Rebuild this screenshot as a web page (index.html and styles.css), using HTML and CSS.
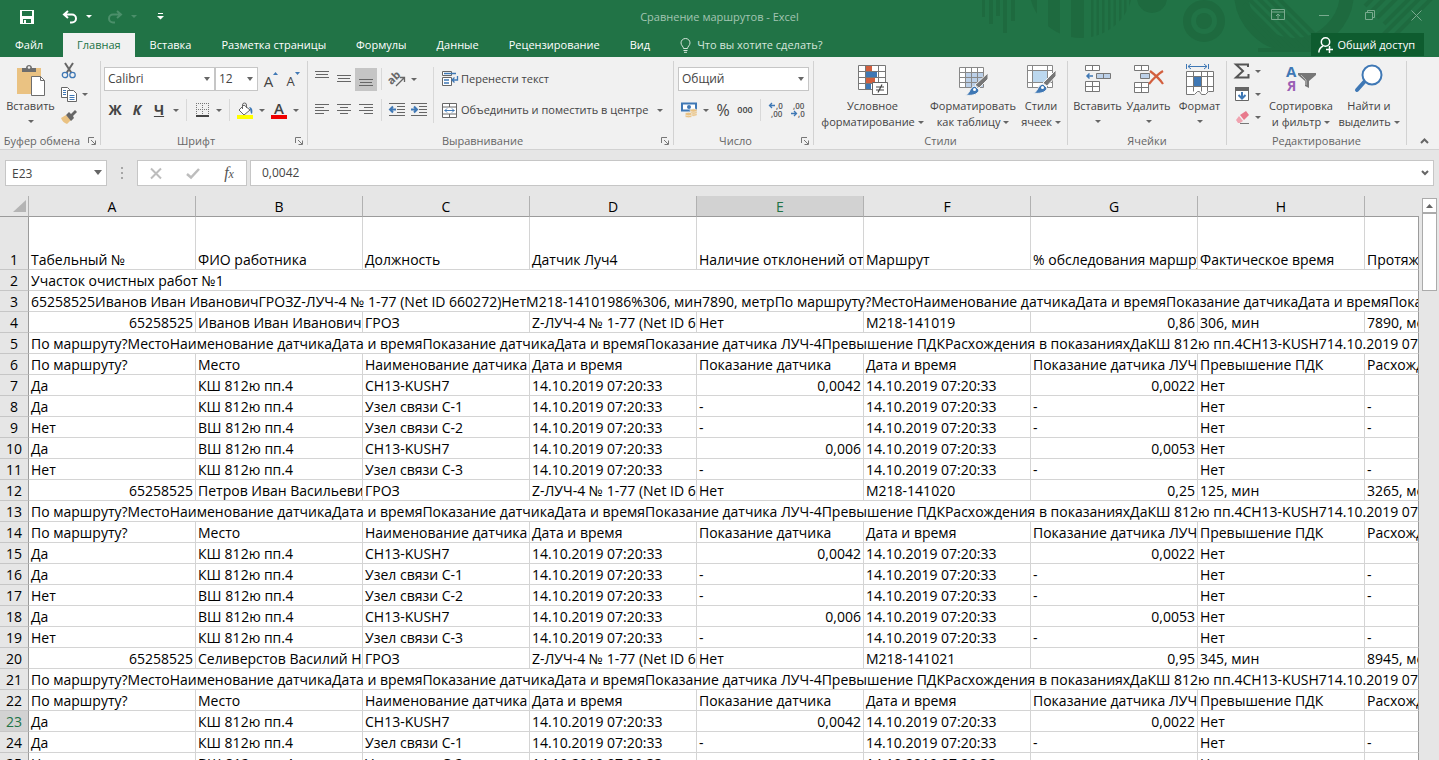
FILE: index.html
```
<!DOCTYPE html>
<html lang="ru">
<head>
    <meta charset="UTF-8">
    <meta name="viewport" content="width=device-width, initial-scale=1.0">
    <title>Сравнение маршрутов - Excel</title>
    <link rel="stylesheet" href="styles.css">
</head>
<body>
    <!-- Шапка окна -->
    <header class="header">
        <svg class="pattern" width="479" height="57" viewBox="0 0 479 57" aria-hidden="true">
            <defs>
                <clipPath id="disc"><circle cx="121" cy="-14" r="52"/></clipPath>
                <clipPath id="hole"><circle cx="334" cy="-8" r="60"/></clipPath>
            </defs>
            <g fill="#1e6a3f">
                <path d="M22 0h3v17h-3zM29 0h4v24h-4zM36 0h4v16h-4zM43 0h4v33h-4zM51 0h4v21h-4z"/>
                <g clip-path="url(#disc)">
                    <path d="M70 0h7v40h-7zM88 0h12v40h-12zM111 0h13v40h-13zM131 0h2.500v40h-2.500zM136.500 0h2.500v40h-2.500zM142 0h2.500v40h-2.500zM148 0h2.500v40h-2.500zM153.500 0h2.500v40h-2.500zM159 0h2.500v40h-2.500zM164 0h2.500v40h-2.500zM169 0h2v40h-2z"/>
                </g>
                <circle cx="192" cy="-2" r="15"/>
                <circle cx="244" cy="21" r="8"/>
            </g>
            <g fill="none" stroke="#1e6a3f">
                <circle cx="244" cy="21" r="17" stroke-width="8"/>
                <circle cx="334" cy="-8" r="53" stroke-width="14"/>
                <g clip-path="url(#hole)" stroke-width="4">
                    <path d="M284 14l40 40M284 4l50 50M288-2l50 50M298-2l50 50M308-2l50 50M318-2l50 50"/>
                </g>
                <path d="M298 50h54" stroke-width="4"/>
                <path d="M405 6l8-8M411 12l16-16M417 18l24-24M424 24l30-30M420 38l48-48M432 38l44-44" stroke-width="4"/>
            </g>
        </svg>
        <div class="titlebar">
            <div class="quick">
                <button type="button" aria-label="Сохранить">
                    <svg width="16" height="16" viewBox="0 0 16 16"><path d="M1 1h14v14H1z" fill="#fff"/><path d="M3 2h10v5H3zM4 10h8v4H4z" fill="#217346"/><path d="M5 11h2v3H5z" fill="#fff"/></svg>
                </button>
                <button type="button" class="undo" aria-label="Отменить">
                    <svg width="16" height="14" viewBox="0 0 16 14" fill="none" stroke="#fff" stroke-width="2"><path d="M6 1L2 4.500L6 8M2 4.500h8a3.500 3.500 0 0 1 0 8H8"/></svg>
                    <i class="caret"></i>
                </button>
                <button type="button" class="redo" aria-label="Вернуть" disabled>
                    <svg width="16" height="14" viewBox="0 0 16 14" fill="none" stroke="#4b8f6a" stroke-width="2"><path d="M10 1l4 3.500L10 8M14 4.500H6a3.500 3.500 0 0 0 0 8h2"/></svg>
                    <i class="caret"></i>
                </button>
                <button type="button" class="customize" aria-label="Настройка панели быстрого доступа">
                    <svg width="7" height="7" viewBox="0 0 7 7" fill="#fff"><path d="M1 0h5v1H1zM0 3h7L3.500 6.500z"/></svg>
                </button>
            </div>
            <div class="title">Сравнение маршрутов - Excel</div>
            <div class="window-buttons">
                <button type="button" aria-label="Параметры отображения ленты">
                    <svg width="14" height="12" viewBox="0 0 14 12" fill="none" stroke="#79ab8f"><path d="M.5.5h13v10H.5zM.5 3h13M7 10V5M5 7l2-2 2 2"/></svg>
                </button>
                <button type="button" aria-label="Свернуть">
                    <svg width="10" height="10" viewBox="0 0 10 10" stroke="#79ab8f"><path d="M0 5.500h10"/></svg>
                </button>
                <button type="button" aria-label="Восстановить">
                    <svg width="10" height="10" viewBox="0 0 10 10" fill="none" stroke="#79ab8f"><path d="M.5 2.500h7v7h-7zM2.500 2.500v-2h7v7h-2"/></svg>
                </button>
                <button type="button" aria-label="Закрыть">
                    <svg width="11" height="11" viewBox="0 0 11 11" stroke="#79ab8f"><path d="M.5.5l10 10M10.500.5l-10 10"/></svg>
                </button>
            </div>
        </div>
        <nav class="tabs">
            <a href="#" class="file">Файл</a>
            <a href="#" class="active">Главная</a>
            <a href="#">Вставка</a>
            <a href="#">Разметка страницы</a>
            <a href="#">Формулы</a>
            <a href="#">Данные</a>
            <a href="#">Рецензирование</a>
            <a href="#">Вид</a>
            <a href="#" class="tell-me">
                <svg width="11" height="15" viewBox="0 0 11 15" fill="none" stroke="#d5e6dc"><path d="M3.500 10.500C3.500 8.500 1 7.500 1 4.900a4.500 4.400 0 0 1 9 0c0 2.600-2.500 3.600-2.500 5.600zM3.500 12.500h4M4 14.300h3"/></svg>
                Что вы хотите сделать?
            </a>
            <button type="button" class="share">
                <svg width="15" height="16" viewBox="0 0 15 16" fill="none" stroke="#fff" stroke-width="1.500"><circle cx="7.500" cy="5" r="4.200"/><path d="M.8 15.500c.3-3.500 1.900-5.500 4.200-6.500M8 12.500h7M11.500 9v7"/></svg>
                Общий доступ
            </button>
        </nav>
    </header>

    <!-- Лента -->
    <section class="ribbon">
        <div class="group clipboard">
            <div class="body">
                <button type="button" class="big">
                    <svg width="30" height="32" viewBox="0 0 30 32"><path d="M1 4h24v26H1z" fill="#eac282"/><path d="M6 4h4c0-4 6-4 6 0h4v4H6z" fill="#6d6d6d"/><circle cx="13" cy="3.500" r="1.300" fill="#f1f1f1"/><path d="M15.500 12.500h9l4 4v15h-13z" fill="#fff" stroke="#6d6d6d"/><path d="M24.500 12.500v4h4" fill="none" stroke="#6d6d6d"/></svg>
                    <span>Вставить</span>
                    <i class="caret"></i>
                </button>
                <div class="stack">
                    <button type="button" aria-label="Вырезать">
                        <svg width="16" height="16" viewBox="0 0 16 16" fill="none"><path d="M4 0l6.500 10M12 0L5.500 10" stroke="#666" stroke-width="2"/><g stroke="#3f78b5" stroke-width="1.300"><circle cx="4" cy="12" r="2.700"/><circle cx="11.500" cy="12" r="2.700"/></g></svg>
                    </button>
                    <button type="button" aria-label="Копировать">
                        <svg width="16" height="15" viewBox="0 0 16 15" fill="#fff" stroke="#666"><path d="M.5.500h6l2 2v8h-8z"/><path d="M6.500 3.500h6l3 3v8h-9z"/><path d="M2 3.500h3M2 5.500h3M2 7.500h3M8.500 8.500h5M8.500 10.500h5M8.500 12.500h5" stroke="#3f78b5"/></svg>
                        <i class="caret"></i>
                    </button>
                    <button type="button" aria-label="Формат по образцу">
                        <svg width="16" height="15" viewBox="0 0 16 15"><path d="M0 8l5-3 5 5-4 4c-3-1-5-3-6-6z" fill="#eac282"/><path d="M5 5l3-3 2 2 4-4 2 2-4 4 1 2-3 3z" fill="#666"/></svg>
                    </button>
                </div>
            </div>
            <div class="caption"><span>Буфер обмена</span><button type="button" class="launcher" aria-label="Параметры буфера обмена"><svg width="8" height="8" viewBox="0 0 8 8" fill="none" stroke="#777"><path d="M.5 6V.5H6M3 3l4 4M7.500 3.500v4h-4"/></svg></button></div>
        </div>

        <div class="group font">
            <div class="body rows">
                <div class="row">
                    <div class="combo font-name"><select aria-label="Шрифт"><option>Calibri</option></select></div>
                    <div class="combo font-size"><select aria-label="Размер шрифта"><option>12</option></select></div>
                    <button type="button" class="tool letter grow" aria-label="Увеличить размер">A<svg width="5" height="3" viewBox="0 0 5 3"><path d="M0 3h5L2.500 0z" fill="#3f78b5"/></svg></button>
                    <button type="button" class="tool letter shrink" aria-label="Уменьшить размер">A<svg width="5" height="3" viewBox="0 0 5 3"><path d="M0 0h5L2.500 3z" fill="#3f78b5"/></svg></button>
                </div>
                <div class="row">
                    <button type="button" class="tool style"><b>Ж</b></button>
                    <button type="button" class="tool style"><b><em>К</em></b></button>
                    <button type="button" class="tool style"><b><u>Ч</u></b></button>
                    <button type="button" class="drop" aria-label="Вид подчеркивания"><i class="caret"></i></button>
                    <span class="sep"></span>
                    <button type="button" class="tool" aria-label="Границы"><svg width="13" height="14" viewBox="0 0 13 14" stroke="#777" fill="none"><path d="M0 .5h13M0 6.500h13M.5 0v13M6.500 0v13M12.500 0v13" stroke-dasharray="1 1"/><path d="M0 13h13" stroke="#444" stroke-width="2"/></svg></button>
                    <button type="button" class="drop" aria-label="Выбор границ"><i class="caret"></i></button>
                    <span class="sep"></span>
                    <button type="button" class="tool" aria-label="Цвет заливки"><svg width="16" height="17" viewBox="0 0 16 17"><path d="M7 3l6 5-6 5-5-5z" fill="#fff" stroke="#666"/><path d="M5.500 7V3a2 2 0 0 1 4 0v3" fill="none" stroke="#666"/><path d="M12 5c3 0 4 3 3 7-2-1-1-4-3-7z" fill="#3f78b5"/><path d="M0 13h16v4H0z" fill="#ff0"/></svg></button>
                    <button type="button" class="drop" aria-label="Выбор заливки"><i class="caret"></i></button>
                    <button type="button" class="tool font-color" aria-label="Цвет текста">A</button>
                    <button type="button" class="drop" aria-label="Выбор цвета текста"><i class="caret"></i></button>
                </div>
            </div>
            <div class="caption"><span>Шрифт</span><button type="button" class="launcher" aria-label="Параметры шрифта"><svg width="8" height="8" viewBox="0 0 8 8" fill="none" stroke="#777"><path d="M.5 6V.5H6M3 3l4 4M7.500 3.500v4h-4"/></svg></button></div>
        </div>

        <div class="group align">
            <div class="body">
                <div class="rows">
                    <div class="row">
                        <button type="button" class="tool" aria-label="По верхнему краю"><svg width="14" height="18" viewBox="0 0 14 18" stroke="#666"><path d="M0 1.500h14M1 4.500h12M0 7.500h14"/></svg></button>
                        <button type="button" class="tool" aria-label="По середине"><svg width="14" height="18" viewBox="0 0 14 18" stroke="#666"><path d="M0 5.500h14M1 8.500h12M0 11.500h14"/></svg></button>
                        <button type="button" class="tool pressed" aria-label="По нижнему краю"><svg width="14" height="18" viewBox="0 0 14 18" stroke="#666"><path d="M0 9.500h14M1 12.500h12M0 15.500h14"/></svg></button>
                        <span class="sep"></span>
                        <button type="button" class="tool" aria-label="Ориентация"><svg width="17" height="16" viewBox="0 0 17 16"><text x="0" y="12" font-size="11" font-weight="bold" fill="#666" transform="rotate(-45 4 10)">ab</text><path d="M7 15l8-8M15.500 11V6.500H11" fill="none" stroke="#666" stroke-width="1.300"/></svg></button>
                        <button type="button" class="drop" aria-label="Выбор ориентации"><i class="caret"></i></button>
                    </div>
                    <div class="row">
                        <button type="button" class="tool" aria-label="По левому краю"><svg width="14" height="12" viewBox="0 0 14 12" stroke="#666"><path d="M0 .5h14M0 3.500h9M0 6.500h14M0 9.500h9"/></svg></button>
                        <button type="button" class="tool" aria-label="По центру"><svg width="14" height="12" viewBox="0 0 14 12" stroke="#666"><path d="M0 .5h14M3 3.500h8M0 6.500h14M3 9.500h8"/></svg></button>
                        <button type="button" class="tool" aria-label="По правому краю"><svg width="14" height="12" viewBox="0 0 14 12" stroke="#666"><path d="M0 .5h14M5 3.500h9M0 6.500h14M5 9.500h9"/></svg></button>
                        <span class="sep"></span>
                        <button type="button" class="tool" aria-label="Уменьшить отступ"><svg width="16" height="14" viewBox="0 0 16 14" stroke="#666"><path d="M0 .5h16M8 3.500h8M8 6.500h8M8 9.500h8M0 12.500h16"/><path d="M7 6.500H2M4 3.500l-3 3 3 3" fill="none" stroke="#3f78b5" stroke-width="2"/></svg></button>
                        <button type="button" class="tool" aria-label="Увеличить отступ"><svg width="16" height="14" viewBox="0 0 16 14" stroke="#666"><path d="M0 .5h16M8 3.500h8M8 6.500h8M8 9.500h8M0 12.500h16"/><path d="M0 6.500h5M3 3.500l3 3-3 3" fill="none" stroke="#3f78b5" stroke-width="2"/></svg></button>
                    </div>
                </div>
                <span class="sep tall"></span>
                <div class="rows">
                    <div class="row">
                        <button type="button" class="wide"><svg width="16" height="16" viewBox="0 0 16 16" fill="#fff" stroke="#666"><path d="M.5.500h9v4h-9zM.5 6.500h9v8h-9z"/><path d="M2 2.500h12M2 9h5M2 12h5M15.500 5v4h-5M12.500 6.500L10 9l2.500 2.500" fill="none" stroke="#3f78b5" stroke-width="1.300"/></svg>Перенести текст</button>
                    </div>
                    <div class="row">
                        <button type="button" class="wide"><svg width="16" height="15" viewBox="0 0 16 15" fill="#fff" stroke="#666"><path d="M.5.500h14v14H.5zM.5 4h14M.5 11h14M7.500.500V4M7.500 11v3.500"/><path d="M2.500 7.500h10M5 5.500l-2 2 2 2M10 5.500l2 2-2 2" fill="none" stroke="#3f78b5"/></svg>Объединить и поместить в центре</button>
                        <button type="button" class="drop" aria-label="Варианты объединения"><i class="caret"></i></button>
                    </div>
                </div>
            </div>
            <div class="caption"><span>Выравнивание</span><button type="button" class="launcher" aria-label="Параметры выравнивания"><svg width="8" height="8" viewBox="0 0 8 8" fill="none" stroke="#777"><path d="M.5 6V.5H6M3 3l4 4M7.500 3.500v4h-4"/></svg></button></div>
        </div>

        <div class="group number">
            <div class="body rows">
                <div class="row">
                    <div class="combo format"><select aria-label="Числовой формат"><option>Общий</option></select></div>
                </div>
                <div class="row">
                    <button type="button" class="tool" aria-label="Финансовый формат"><svg width="17" height="16" viewBox="0 0 17 16"><path d="M1 1.500h14v7H1z" fill="#fff" stroke="#3f78b5" stroke-width="2"/><circle cx="8" cy="5" r="2" fill="#3f78b5"/><g fill="#eac282" stroke="#f1f1f1" stroke-width=".6"><ellipse cx="12.500" cy="12.500" rx="3.500" ry="1.700"/><ellipse cx="12.500" cy="10.500" rx="3.500" ry="1.700"/><ellipse cx="12.500" cy="8.500" rx="3.500" ry="1.700"/><ellipse cx="7.500" cy="14" rx="3.500" ry="1.700"/><ellipse cx="7.500" cy="12" rx="3.500" ry="1.700"/></g></svg></button>
                    <button type="button" class="drop" aria-label="Выбор валюты"><i class="caret"></i></button>
                    <button type="button" class="tool percent">%</button>
                    <button type="button" class="tool thousands">000</button>
                    <span class="sep"></span>
                    <button type="button" class="tool" aria-label="Увеличить разрядность"><svg class="digits" width="16" height="16" viewBox="0 0 16 16"><text x="8" y="7">,0</text><text x="3" y="15">,00</text><path d="M7 3.500H2M4 1L1.500 3.500L4 6" fill="none" stroke="#3f78b5" stroke-width="1.300"/></svg></button>
                    <button type="button" class="tool" aria-label="Уменьшить разрядность"><svg class="digits" width="16" height="16" viewBox="0 0 16 16"><text x="3" y="7">,00</text><text x="8" y="15">,0</text><path d="M1 11.500h5M4 9l2.500 2.500L4 14" fill="none" stroke="#3f78b5" stroke-width="1.300"/></svg></button>
                </div>
            </div>
            <div class="caption"><span>Число</span><button type="button" class="launcher" aria-label="Параметры числа"><svg width="8" height="8" viewBox="0 0 8 8" fill="none" stroke="#777"><path d="M.5 6V.5H6M3 3l4 4M7.500 3.500v4h-4"/></svg></button></div>
        </div>

        <div class="group styles">
            <div class="body">
                <button type="button" class="big conditional">
                    <svg width="32" height="32" viewBox="0 0 32 32"><path d="M1.500 1.500h27v24h-27z" fill="#fff"/><path d="M9 2h6v5H9zM9 14h9v5H9z" fill="#d35f3e"/><path d="M9 8h11v5H9zM9 20h5v5H9z" fill="#3f78b5"/><path d="M1.500 1.500h27v24h-27zM1.500 7.500h27M1.500 13.500h27M1.500 19.500h27M8.500 1.500v24M21.500 1.500v24" fill="none" stroke="#777"/><path d="M15.500 18.500h15v12h-15z" fill="#fff" stroke="#666"/><path d="M19 23h8M19 26h8M25 20.500l-4 8" stroke="#444" stroke-width="1.200"/></svg>
                    <span>Условное<br>форматирование <i class="caret"></i></span>
                </button>
                <button type="button" class="big as-table">
                    <svg width="32" height="32" viewBox="0 0 32 32"><path d="M2.500 3.500h24v20h-24z" fill="#fff"/><path d="M9 9h17v14H9z" fill="#bcd0e8"/><path d="M2.500 3.500h24v20h-24zM2.500 8.500h24M2.500 13.500h24M2.500 18.500h24M8.500 3.500v20M14.500 3.500v20M20.500 3.500v20" fill="none" stroke="#888"/><path d="M31 9v6l-9 9-4-3z" fill="#777" stroke="#f1f1f1"/><path d="M8 31c5 0 4-8 10-9l4 4c-1 5-8 6-14 5z" fill="#3f78b5" stroke="#f1f1f1"/><circle cx="17.500" cy="25.500" r="1.500" fill="#fff"/></svg>
                    <span>Форматировать<br>как таблицу <i class="caret"></i></span>
                </button>
                <button type="button" class="big cell-styles">
                    <svg width="32" height="32" viewBox="0 0 32 32"><path d="M2.500 1.500h25v22h-25z" fill="#fff"/><path d="M8 7h14v11H8z" fill="#bcd8ef"/><path d="M2.500 1.500h25v22h-25zM2.500 6.500h25M2.500 18.500h25M7.500 1.500v22M22.500 1.500v22" fill="none" stroke="#888"/><path d="M31 6v6l-9 10-4-3z" fill="#777" stroke="#f1f1f1"/><path d="M8 29c5 0 4-8 10-9l4 4c-1 5-8 6-14 5z" fill="#3f78b5" stroke="#f1f1f1"/><circle cx="17.500" cy="23.500" r="1.500" fill="#fff"/></svg>
                    <span>Стили<br>ячеек <i class="caret"></i></span>
                </button>
            </div>
            <div class="caption"><span>Стили</span></div>
        </div>

        <div class="group cells">
            <div class="body">
                <button type="button" class="big">
                    <svg width="30" height="32" viewBox="0 0 30 32" fill="#fff" stroke="#777"><path d="M2.500 1.500h14v5h-14zM9.500 1.500v5M2.500 17.500h14v10h-14zM9.500 17.500v10M2.500 22.500h14"/><path d="M13.500 9.500h14v5h-14zM20.500 9.500v5" fill="#bcd0e8"/><path d="M10 12H4M6.500 9.500L4 12l2.500 2.500" fill="none" stroke="#3f78b5" stroke-width="1.500"/></svg>
                    <span>Вставить</span>
                    <i class="caret"></i>
                </button>
                <button type="button" class="big">
                    <svg width="30" height="32" viewBox="0 0 30 32" fill="#fff" stroke="#777"><path d="M.5 1.500h14v5H.5zM7.500 1.500v5M.5 18.500h14v10H.5zM7.500 18.500v10M.5 23.500h14"/><path d="M6.500 9.500h9v5h-9z" fill="#bcd0e8"/><path d="M16 7c4 3 9 7 13 13M29 7c-5 3-10 8-14 13" fill="none" stroke="#d35f3e" stroke-width="2.200"/></svg>
                    <span>Удалить</span>
                    <i class="caret"></i>
                </button>
                <button type="button" class="big">
                    <svg width="30" height="32" viewBox="0 0 30 32" fill="#fff" stroke="#777"><path d="M1.500 7.500h27v20h-5l-3 3h-4l-2-3h-2l-3 3h-8z"/><path d="M1.500 12.500h27M1.500 22.500h27M8.500 7.500v20M16.500 7.500v20M22.500 7.500v20" fill="none"/><path d="M9 13h7v9H9z" fill="#3f78b5" stroke="none"/><path d="M1.500 0v5M23.500 0v5M3 2.500h19M6 0L3 2.500L6 5M19 0l3 2.500L19 5" fill="none" stroke="#3f78b5"/></svg>
                    <span>Формат</span>
                    <i class="caret"></i>
                </button>
            </div>
            <div class="caption"><span>Ячейки</span></div>
        </div>

        <div class="group editing">
            <div class="body">
                <div class="stack">
                    <button type="button" aria-label="Автосумма">
                        <svg width="16" height="16" viewBox="0 0 16 16"><path d="M14 4V1.500H2L9 8l-7 6.500h12.500V11" fill="none" stroke="#555" stroke-width="2"/></svg>
                        <i class="caret"></i>
                    </button>
                    <button type="button" aria-label="Заполнить">
                        <svg width="16" height="16" viewBox="0 0 16 16"><path d="M1.500 1.500h13v13h-13z" fill="#fff" stroke="#666"/><path d="M1 1h14v4H1z" fill="#666"/><path d="M8 6v6M4.500 9l3.500 3.500L11.500 9" fill="none" stroke="#3f78b5" stroke-width="2"/></svg>
                        <i class="caret"></i>
                    </button>
                    <button type="button" aria-label="Очистить">
                        <svg width="16" height="15" viewBox="0 0 16 15"><path d="M6 5l6-4 3 4-5 5z" fill="#e8798c"/><path d="M5 6l4 5-3 2H4L2 10z" fill="#f0a3b0"/><path d="M6 13.500h9" stroke="#777"/></svg>
                        <i class="caret"></i>
                    </button>
                </div>
                <button type="button" class="big sort">
                    <svg width="32" height="32" viewBox="0 0 32 32"><text x="1" y="13" font-size="15" font-weight="bold" fill="#3f78b5">А</text><text x="2" y="27" font-size="14" font-weight="bold" fill="#9b5fb5">Я</text><path d="M13 9h18v2l-7 6v7l-4-2v-5l-7-6z" fill="#777"/><path d="M16 11l5 5v5" stroke="#bbb" fill="none"/></svg>
                    <span>Сортировка<br>и фильтр <i class="caret"></i></span>
                </button>
                <button type="button" class="big find">
                    <svg width="30" height="32" viewBox="0 0 30 32"><path d="M11 17L3 26" stroke="#3f78b5" stroke-width="4" stroke-linecap="round"/><circle cx="18" cy="11" r="9.500" fill="#fff" stroke="#3f78b5" stroke-width="2"/></svg>
                    <span>Найти и<br>выделить <i class="caret"></i></span>
                </button>
            </div>
            <div class="caption"><span>Редактирование</span></div>
        </div>
        <button type="button" class="collapse" aria-label="Свернуть ленту"><svg width="9" height="6" viewBox="0 0 9 6" fill="none" stroke="#666" stroke-width="2"><path d="M1 5l3.500-3.500L8 5"/></svg></button>
    </section>

    <!-- Строка формул -->
    <section class="formula-bar">
        <div class="combo name-box"><input type="text" value="E23" aria-label="Имя ячейки"></div>
        <span class="dots"></span>
        <div class="formula-buttons">
            <button type="button" aria-label="Отмена"><svg width="12" height="11" viewBox="0 0 12 11" stroke="#bdbdbd" stroke-width="2"><path d="M1 .5l10 10M11 .5l-10 10"/></svg></button>
            <button type="button" aria-label="Ввод"><svg width="14" height="11" viewBox="0 0 14 11" fill="none" stroke="#bdbdbd" stroke-width="2.500"><path d="M1 6l4 3.500L13 1"/></svg></button>
            <button type="button" class="fx" aria-label="Вставить функцию"><em>f<small>x</small></em></button>
        </div>
        <div class="formula">
            <input type="text" value="0,0042" aria-label="Строка формул">
            <button type="button" aria-label="Развернуть строку формул"><svg width="8" height="6" viewBox="0 0 8 6" fill="none" stroke="#666" stroke-width="2"><path d="M1 1l3 3 3-3"/></svg></button>
        </div>
    </section>

    <!-- Лист -->
    <main class="workspace">
        <div class="sheet">
            <table>
                <colgroup>
                    <col class="numbers"><col class="data"><col class="data"><col class="data"><col class="data"><col class="data"><col class="data"><col class="data"><col class="data"><col>
                </colgroup>
                <thead>
                    <tr><th class="corner"><i></i></th><th>A</th><th>B</th><th>C</th><th>D</th><th class="selected">E</th><th>F</th><th>G</th><th>H</th><th></th></tr>
                </thead>
                <tbody>
                    <tr class="first"><th>1</th><td>Табельный №</td><td>ФИО работника</td><td>Должность</td><td>Датчик Луч4</td><td>Наличие отклонений от маршрута</td><td>Маршрут</td><td>% обследования маршрута</td><td>Фактическое время</td><td>Протяженность</td></tr>
                    <tr><th>2</th><td colspan="9">Участок очистных работ №1</td></tr>
                    <tr><th>3</th><td colspan="9">65258525Иванов Иван ИвановичГРОЗZ-ЛУЧ-4 № 1-77 (Net ID 660272)НетМ218-14101986%306, мин7890, метрПо маршруту?МестоНаименование датчикаДата и времяПоказание датчикаДата и времяПоказание датчика</td></tr>
                    <tr><th>4</th><td class="num">65258525</td><td>Иванов Иван Иванович</td><td>ГРОЗ</td><td>Z-ЛУЧ-4 № 1-77 (Net ID 660272)</td><td>Нет</td><td>М218-141019</td><td class="num">0,86</td><td>306, мин</td><td>7890, метр</td></tr>
                    <tr><th>5</th><td colspan="9">По маршруту?МестоНаименование датчикаДата и времяПоказание датчикаДата и времяПоказание датчика ЛУЧ-4Превышение ПДКРасхождения в показанияхДаКШ 812ю пп.4CH13-KUSH714.10.2019 07:20:33</td></tr>
                    <tr><th>6</th><td>По маршруту?</td><td>Место</td><td>Наименование датчика</td><td>Дата и время</td><td>Показание датчика</td><td>Дата и время</td><td>Показание датчика ЛУЧ-4</td><td>Превышение ПДК</td><td>Расхождения в показаниях</td></tr>
                    <tr><th>7</th><td>Да</td><td>КШ 812ю пп.4</td><td>CH13-KUSH7</td><td>14.10.2019 07:20:33</td><td class="num">0,0042</td><td>14.10.2019 07:20:33</td><td class="num">0,0022</td><td>Нет</td><td></td></tr>
                    <tr><th>8</th><td>Да</td><td>КШ 812ю пп.4</td><td>Узел связи С-1</td><td>14.10.2019 07:20:33</td><td>-</td><td>14.10.2019 07:20:33</td><td>-</td><td>Нет</td><td>-</td></tr>
                    <tr><th>9</th><td>Нет</td><td>ВШ 812ю пп.4</td><td>Узел связи С-2</td><td>14.10.2019 07:20:33</td><td>-</td><td>14.10.2019 07:20:33</td><td>-</td><td>Нет</td><td>-</td></tr>
                    <tr><th>10</th><td>Да</td><td>ВШ 812ю пп.4</td><td>CH13-KUSH7</td><td>14.10.2019 07:20:33</td><td class="num">0,006</td><td>14.10.2019 07:20:33</td><td class="num">0,0053</td><td>Нет</td><td></td></tr>
                    <tr><th>11</th><td>Нет</td><td>КШ 812ю пп.4</td><td>Узел связи С-3</td><td>14.10.2019 07:20:33</td><td>-</td><td>14.10.2019 07:20:33</td><td>-</td><td>Нет</td><td>-</td></tr>
                    <tr><th>12</th><td class="num">65258525</td><td>Петров Иван Васильевич</td><td>ГРОЗ</td><td>Z-ЛУЧ-4 № 1-77 (Net ID 660272)</td><td>Нет</td><td>М218-141020</td><td class="num">0,25</td><td>125, мин</td><td>3265, метр</td></tr>
                    <tr><th>13</th><td colspan="9">По маршруту?МестоНаименование датчикаДата и времяПоказание датчикаДата и времяПоказание датчика ЛУЧ-4Превышение ПДКРасхождения в показанияхДаКШ 812ю пп.4CH13-KUSH714.10.2019 07:20:33</td></tr>
                    <tr><th>14</th><td>По маршруту?</td><td>Место</td><td>Наименование датчика</td><td>Дата и время</td><td>Показание датчика</td><td>Дата и время</td><td>Показание датчика ЛУЧ-4</td><td>Превышение ПДК</td><td>Расхождения в показаниях</td></tr>
                    <tr><th>15</th><td>Да</td><td>КШ 812ю пп.4</td><td>CH13-KUSH7</td><td>14.10.2019 07:20:33</td><td class="num">0,0042</td><td>14.10.2019 07:20:33</td><td class="num">0,0022</td><td>Нет</td><td></td></tr>
                    <tr><th>16</th><td>Да</td><td>КШ 812ю пп.4</td><td>Узел связи С-1</td><td>14.10.2019 07:20:33</td><td>-</td><td>14.10.2019 07:20:33</td><td>-</td><td>Нет</td><td>-</td></tr>
                    <tr><th>17</th><td>Нет</td><td>ВШ 812ю пп.4</td><td>Узел связи С-2</td><td>14.10.2019 07:20:33</td><td>-</td><td>14.10.2019 07:20:33</td><td>-</td><td>Нет</td><td>-</td></tr>
                    <tr><th>18</th><td>Да</td><td>ВШ 812ю пп.4</td><td>CH13-KUSH7</td><td>14.10.2019 07:20:33</td><td class="num">0,006</td><td>14.10.2019 07:20:33</td><td class="num">0,0053</td><td>Нет</td><td></td></tr>
                    <tr><th>19</th><td>Нет</td><td>КШ 812ю пп.4</td><td>Узел связи С-3</td><td>14.10.2019 07:20:33</td><td>-</td><td>14.10.2019 07:20:33</td><td>-</td><td>Нет</td><td>-</td></tr>
                    <tr><th>20</th><td class="num">65258525</td><td>Селиверстов Василий Николаевич</td><td>ГРОЗ</td><td>Z-ЛУЧ-4 № 1-77 (Net ID 660272)</td><td>Нет</td><td>М218-141021</td><td class="num">0,95</td><td>345, мин</td><td>8945, метр</td></tr>
                    <tr><th>21</th><td colspan="9">По маршруту?МестоНаименование датчикаДата и времяПоказание датчикаДата и времяПоказание датчика ЛУЧ-4Превышение ПДКРасхождения в показанияхДаКШ 812ю пп.4CH13-KUSH714.10.2019 07:20:33</td></tr>
                    <tr><th>22</th><td>По маршруту?</td><td>Место</td><td>Наименование датчика</td><td>Дата и время</td><td>Показание датчика</td><td>Дата и время</td><td>Показание датчика ЛУЧ-4</td><td>Превышение ПДК</td><td>Расхождения в показаниях</td></tr>
                    <tr><th class="selected">23</th><td>Да</td><td>КШ 812ю пп.4</td><td>CH13-KUSH7</td><td>14.10.2019 07:20:33</td><td class="num">0,0042</td><td>14.10.2019 07:20:33</td><td class="num">0,0022</td><td>Нет</td><td></td></tr>
                    <tr><th>24</th><td>Да</td><td>КШ 812ю пп.4</td><td>Узел связи С-1</td><td>14.10.2019 07:20:33</td><td>-</td><td>14.10.2019 07:20:33</td><td>-</td><td>Нет</td><td>-</td></tr>
                    <tr><th>25</th><td>Нет</td><td>ВШ 812ю пп.4</td><td>Узел связи С-2</td><td>14.10.2019 07:20:33</td><td>-</td><td>14.10.2019 07:20:33</td><td>-</td><td>Нет</td><td>-</td></tr>
                </tbody>
            </table>
        </div>
        <div class="scrollbar">
            <button type="button" aria-label="Прокрутить вверх"><svg width="7" height="4" viewBox="0 0 7 4"><path d="M0 4h7L3.500 0z" fill="#666"/></svg></button>
            <div class="thumb"></div>
        </div>
    </main>
</body>
</html>
```

FILE: styles.css
```
* {
    box-sizing: border-box;
}

body {
    margin: 0;
    height: 100vh;
    display: flex;
    flex-direction: column;
    overflow: hidden;
    background: #e6e6e6;
    color: #444;
    font-family: "Open Sans", "Noto Sans", sans-serif;
    font-size: 11px;
    line-height: 16px;
}

button, input, select {
    margin: 0;
    padding: 0;
    border: none;
    background: none;
    color: inherit;
    font: inherit;
}

svg {
    display: block;
    flex: none;
    overflow: visible;
}

.caret {
    display: inline-block;
    flex: none;
    border: 3px solid transparent;
    border-top-color: #666;
    border-bottom: none;
}

/* Шапка */
.header {
    position: relative;
    flex: none;
    background: #217346;
    color: #fff;
}

.pattern {
    position: absolute;
    top: 0;
    right: 0;
    overflow: hidden;
}

.titlebar {
    position: relative;
    display: grid;
    grid-template-columns: 1fr auto 1fr;
    align-items: center;
    height: 33px;
}

.quick {
    display: flex;
    align-items: center;
    height: 30px;
    padding-left: 19px;
}

.quick button {
    display: flex;
    align-items: center;
    gap: 8px;
}

.quick .caret {
    border-top-color: #fff;
}

.quick .undo {
    margin-left: 27px;
}

.quick .redo {
    margin-left: 15px;
}

.quick .redo .caret {
    border-top-color: #4b8f6a;
}

.quick .customize {
    margin-left: 20px;
}

.title {
    color: #a3c5b2;
}

.window-buttons {
    display: flex;
    justify-content: flex-end;
    padding-bottom: 3px;
}

.window-buttons button {
    display: flex;
    align-items: center;
    justify-content: center;
    width: 46px;
    height: 30px;
}

.tabs {
    position: relative;
    display: flex;
    height: 24px;
    line-height: 24px;
}

.tabs a {
    padding: 0 15px;
    color: #fff;
    text-decoration: none;
    white-space: nowrap;
}

.tabs .file {
    width: 63px;
}

.tabs .active {
    padding: 0 14px;
    background: #f1f1f1;
    color: #217346;
}

.tabs .tell-me {
    display: flex;
    align-items: center;
    gap: 6px;
    color: #d5e6dc;
}

.share {
    display: flex;
    align-items: center;
    gap: 4px;
    height: 23px;
    margin-left: auto;
    margin-right: 15px;
    padding: 0 9px 0 7px;
    background: #0e5c2f;
}

/* Лента */
.ribbon {
    display: flex;
    flex: none;
    height: 93px;
    background: #f1f1f1;
    border-bottom: 1px solid #d2d2d2;
}

.group {
    display: flex;
    flex: none;
    flex-direction: column;
    padding-right: 1px;
    background: linear-gradient(#d2d2d2, #d2d2d2) right 4px / 1px 84px no-repeat;
}

.group .body {
    display: flex;
    height: 76px;
}

.clipboard { width: 101px; }
.font { width: 207px; }
.align { width: 366px; }
.number { width: 140px; }
.styles { width: 254px; }
.cells { width: 159px; }
.editing { width: 180px; }

.caption {
    display: flex;
    height: 16px;
    color: #666;
    text-align: center;
}

.caption span {
    flex: 1;
    white-space: nowrap;
}

.launcher {
    display: flex;
    align-items: center;
    justify-content: center;
    width: 16px;
}

.group .rows {
    display: flex;
    flex-direction: column;
    gap: 7px;
    padding: 10px 3px 0;
}

.align .body .rows:last-child {
    padding-left: 8px;
}

.number .rows {
    padding-left: 4px;
}

.row {
    display: flex;
    align-items: center;
    height: 24px;
}

.tool {
    display: flex;
    align-items: center;
    justify-content: center;
    width: 22px;
    height: 23px;
}

.pressed {
    background: #c5c5c5;
}

.drop {
    display: flex;
    align-items: center;
    justify-content: center;
    width: 12px;
    height: 22px;
}

.sep {
    width: 1px;
    height: 22px;
    margin: 0 4px;
    background: #d8d8d8;
}

.sep.tall {
    height: 56px;
    margin: 10px 0 0;
}

.wide {
    display: flex;
    align-items: center;
    gap: 3px;
    white-space: nowrap;
}

.align .wide + .drop {
    margin-left: 6px;
}

.combo {
    position: relative;
    height: 24px;
    background: #fff;
    border: 1px solid #c6c6c6;
    font-size: 12px;
}

.combo::after {
    content: "";
    position: absolute;
    top: 9px;
    right: 4px;
    border: 3px solid transparent;
    border-top: 4px solid #666;
    border-bottom: none;
    pointer-events: none;
}

.combo select,
.combo input {
    width: 100%;
    height: 100%;
    padding-left: 3px;
    appearance: none;
}

.font-name { width: 111px; }
.font-size { width: 43px; }
.format { width: 131px; }

.letter {
    align-items: flex-end;
    font-size: 15px;
    line-height: 20px;
}

.letter svg {
    align-self: flex-start;
    margin-top: 4px;
}

.shrink {
    font-size: 13px;
}

.grow {
    margin-left: 2px;
}

.style {
    font-size: 14px;
}

.font-color {
    width: 16px;
    height: 18px;
    margin: 0 3px;
    border-bottom: 4px solid #f00000;
    font-size: 15px;
    font-weight: 600;
    line-height: 14px;
}

.percent {
    font-size: 16px;
}

.thousands {
    font-size: 9px;
    font-weight: 600;
}

.digits text {
    font-size: 8px;
    font-weight: 600;
    fill: #555;
}

.big {
    display: flex;
    flex-direction: column;
    align-items: center;
    padding-top: 7px;
    white-space: nowrap;
}

.big span {
    margin-top: 2px;
}

.big span .caret {
    vertical-align: 2px;
}

.big > .caret {
    margin-top: 6px;
}

.clipboard .big {
    width: 61px;
}

.stack {
    display: flex;
    flex-direction: column;
    gap: 1px;
    padding-top: 3px;
}

.stack button {
    display: flex;
    align-items: center;
    gap: 5px;
    height: 22px;
}

.styles .body {
    padding-left: 3px;
}

.cells .body {
    padding-left: 4px;
}

.conditional { width: 111px; }
.as-table { width: 90px; }
.cell-styles { width: 46px; }

.cells .big {
    width: 51px;
}

.editing .stack {
    width: 40px;
    padding-left: 7px;
}

.sort { width: 68px; }
.find { width: 68px; }

.collapse {
    align-self: flex-end;
    margin: 0 10px 5px auto;
}

/* Строка формул */
.formula-bar {
    display: flex;
    flex: none;
    height: 46px;
    padding: 10px 5px;
    font-size: 12px;
}

.name-box {
    width: 102px;
    height: 26px;
}

.name-box::after {
    border-width: 5px 4px 0;
}

.name-box input {
    padding-left: 6px;
}

.dots {
    width: 2px;
    height: 12px;
    margin: 7px 14px 0;
    background: repeating-linear-gradient(#a6a6a6 0 2px, transparent 2px 5px);
}

.formula-buttons {
    display: flex;
    justify-content: space-around;
    align-items: center;
    width: 110px;
    height: 26px;
    margin-right: 3px;
    background: #fff;
    border: 1px solid #c6c6c6;
}

.fx {
    color: #555;
    font-family: "Liberation Serif", serif;
    font-size: 16px;
}

.fx small {
    font-size: 12px;
}

.formula {
    display: flex;
    flex: 1;
    align-items: center;
    height: 26px;
    padding: 0 4px 0 11px;
    background: #fff;
    border: 1px solid #c6c6c6;
}

.formula input {
    flex: 1;
}

/* Лист */
.workspace {
    display: flex;
    flex: 1;
    min-height: 0;
}

.sheet {
    flex: 1;
    min-width: 0;
    overflow: hidden;
    color: #000;
    font-size: 14px;
    line-height: 18px;
}

table {
    width: 100%;
    table-layout: fixed;
    border-collapse: separate;
    border-spacing: 0;
}

.numbers { width: 29px; }
.data { width: 167px; }

th, td {
    height: 21px;
    padding: 0 2px;
    overflow: hidden;
    white-space: nowrap;
    font-weight: normal;
    vertical-align: bottom;
}

th {
    padding: 0;
    background: #e6e6e6;
    border-right: 1px solid #9b9b9b;
    border-bottom: 1px solid #c6c6c6;
}

thead th {
    border-right-color: #b1b1b1;
    border-bottom-color: #9b9b9b;
}

thead th:last-child {
    border-right: none;
}

.corner i {
    display: block;
    width: 13px;
    margin: 0 2px 4px auto;
    border-left: 13px solid transparent;
    border-bottom: 12px solid #b4b4b4;
}

th.selected {
    background: #d2d2d2;
    color: #217346;
}

td {
    background: #fff;
    border-right: 1px solid #d4d4d4;
    border-bottom: 1px solid #d4d4d4;
}

td:last-child {
    border-right-color: #9b9b9b;
}

.first th, .first td {
    height: 53px;
}

.num {
    text-align: right;
}

.scrollbar {
    width: 20px;
    padding: 2px 2px 0 3px;
}

.scrollbar button {
    display: flex;
    align-items: center;
    justify-content: center;
    width: 15px;
    height: 15px;
    background: #fff;
    border: 1px solid #ababab;
}

.thumb {
    width: 15px;
    height: 78px;
    background: #fff;
    border: 1px solid #ababab;
}
```
